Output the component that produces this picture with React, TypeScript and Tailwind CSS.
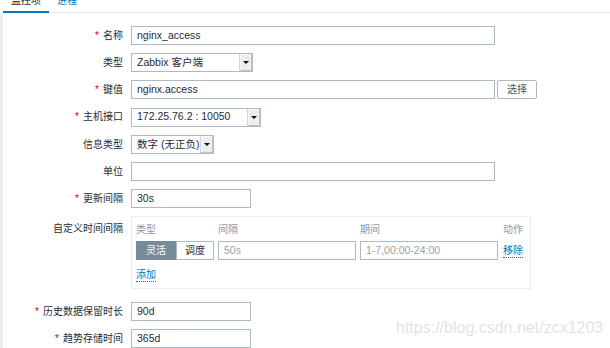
import React from "react";

const Req = () => <span className="text-[#d40000] mr-[4px]">*</span>;

const Label: React.FC<{ text: string; req?: boolean; top?: boolean }> = ({ text, req, top }) => (
  <div
    className={`w-[128px] shrink-0 pr-[8px] text-right text-[10px] text-[#1f2c33] leading-[14px] ${
      top ? "self-start pt-[6px]" : ""
    }`}
  >
    {req && <Req />}
    {text}
  </div>
);

const Input: React.FC<{ value?: string; width: string; placeholder?: string }> = ({
  value,
  width,
  placeholder,
}) => (
  <div
    className={`${width} h-[19px] border border-[#acbbc2] bg-white flex items-center pl-[5px] text-[10.5px] leading-none ${
      value ? "text-[#1f2c33]" : "text-[#9aa0a4]"
    }`}
  >
    {value ?? placeholder}
  </div>
);

const Select: React.FC<{ value: string; width: string }> = ({ value, width }) => (
  <div className={`${width} h-[19px] border border-[#acbbc2] bg-white flex items-stretch text-[10.5px] text-[#1f2c33]`}>
    <div className="flex-1 flex items-center pl-[5px] whitespace-nowrap overflow-hidden">{value}</div>
    <div className="w-[13px] bg-[#ededed] border-l border-[#d6d6d6] shadow-[inset_-1px_-1px_0_#c4c4c4,inset_1px_1px_0_#fafafa] flex items-center justify-center">
      <div className="w-0 h-0 border-l-[3px] border-r-[3px] border-t-[3px] border-l-transparent border-r-transparent border-t-[#111]" />
    </div>
  </div>
);

const Row: React.FC<{ children: React.ReactNode; className?: string }> = ({ children, className }) => (
  <div className={`flex items-center ${className ?? ""}`}>{children}</div>
);

export default function App() {
  return (
    <div className="relative w-[610px] h-[348px] overflow-hidden bg-white font-['Liberation_Sans','Noto_Sans_CJK_SC',sans-serif]">
      {/* Tabs */}
      <div className="flex ml-[3px] -mt-[6px] border-b border-[#dfe4e7] text-[10px] leading-[14px]">
        <div className="px-[8px] pb-[3px] border-b-2 border-[#0275b8] -mb-px text-[#1f2c33]">监控项</div>
        <div className="px-[8px] pb-[3px] text-[#0275b8]">进程</div>
      </div>

      {/* Form */}
      <div className="border-l-[3px] border-[#ebeef0] h-full pt-[13px] flex flex-col gap-[8px]">
        <Row>
          <Label text="名称" req />
          <Input value="nginx_access" width="w-[364px]" />
        </Row>
        <Row>
          <Label text="类型" />
          <Select value="Zabbix 客户端" width="w-[122px]" />
        </Row>
        <Row>
          <Label text="键值" req />
          <Input value="nginx.access" width="w-[364px]" />
          <button className="ml-[2px] w-[40px] h-[19px] border border-[#acbbc2] rounded-[2px] bg-white text-[10px] text-[#4a555c] leading-none">
            选择
          </button>
        </Row>
        <Row className="h-[20px]">
          <Label text="主机接口" req />
          <Select value="172.25.76.2 : 10050" width="w-[130px]" />
        </Row>
        <Row>
          <Label text="信息类型" />
          <Select value="数字 (无正负)" width="w-[83px]" />
        </Row>
        <Row>
          <Label text="单位" />
          <Input value="" width="w-[364px]" />
        </Row>
        <Row>
          <Label text="更新间隔" req />
          <Input value="30s" width="w-[120px]" />
        </Row>
        <Row>
          <Label text="自定义时间间隔" top />
          <div className="w-[400px] h-[73px] border border-[#ebeef0] pl-[4px] pr-[7px] pt-[6px]">
            <div className="flex text-[10px] leading-[14px] text-[#8b9aa3]">
              <div className="w-[82px]">类型</div>
              <div className="w-[142px]">间隔</div>
              <div className="w-[142px]">期间</div>
              <div className="flex-1 text-right">动作</div>
            </div>
            <div className="flex items-center mt-[4px]">
              <div className="w-[78px] h-[19px] flex text-[10px] leading-none">
                <div className="w-[40px] bg-[#768d99] text-white flex items-center justify-center">灵活</div>
                <div className="flex-1 border border-[#acbbc2] bg-white text-[#1f2c33] flex items-center justify-center">
                  调度
                </div>
              </div>
              <div className="ml-[4px]">
                <Input placeholder="50s" width="w-[138px]" />
              </div>
              <div className="ml-[4px]">
                <Input placeholder="1-7,00:00-24:00" width="w-[138px]" />
              </div>
              <div className="flex-1 flex justify-end">
                <span className="text-[10px] leading-[13px] text-[#0275b8] border-b border-dotted border-[#0275b8]">
                  移除
                </span>
              </div>
            </div>
            <div className="mt-[8px] flex">
              <span className="text-[10px] leading-[13px] text-[#0275b8] border-b border-dotted border-[#0275b8]">
                添加
              </span>
            </div>
          </div>
        </Row>
        <Row className="mt-[5px]">
          <Label text="历史数据保留时长" req />
          <Input value="90d" width="w-[120px]" />
        </Row>
        <Row>
          <Label text="趋势存储时间" req />
          <Input value="365d" width="w-[120px]" />
        </Row>
      </div>

      {/* Watermark */}
      <div className="absolute left-[396px] top-[318px] text-[16px] leading-[20px] text-[#e4e4e4] font-['Liberation_Sans',sans-serif] pointer-events-none">
        https://blog.csdn.net/zcx1203
      </div>
    </div>
  );
}
